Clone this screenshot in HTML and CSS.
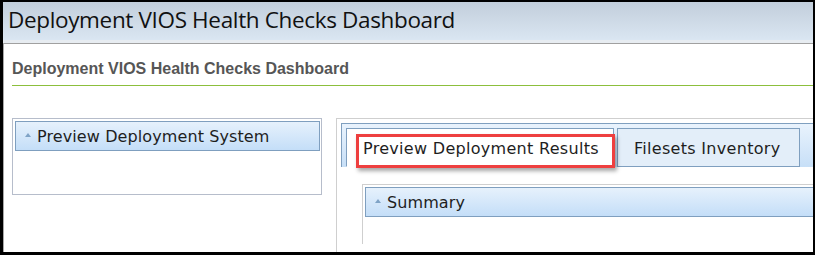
FILE: index.html
```html
<!DOCTYPE html>
<html>
<head>
<meta charset="utf-8">
<link rel="stylesheet" href="styles.css">
</head>
<body>
<div class="frame">
  <div class="window">
    <div class="titlebar">Deployment VIOS Health Checks Dashboard</div>
    <div class="strip"></div>
    <div class="content">
      <h1 class="heading">Deployment VIOS Health Checks Dashboard</h1>
      <div class="panels">
        <div class="panel left-panel">
          <div class="phead"><span class="tri"></span><span>Preview Deployment System</span></div>
        </div>
        <div class="panel right-panel">
          <div class="tabstrip">
            <div class="tab selected">Preview Deployment Results</div>
            <div class="tab files">Filesets Inventory</div>
            <div class="highlight"></div>
          </div>
          <div class="tabbody">
            <div class="summary">
              <div class="phead"><span class="tri"></span><span>Summary</span></div>
            </div>
          </div>
        </div>
      </div>
    </div>
  </div>
</div>
</body>
</html>
```
FILE: styles.css
```css
html, body {
  margin: 0;
  padding: 0;
  width: 815px;
  height: 255px;
  overflow: hidden;
  background: #000;
}
.frame {
  box-sizing: border-box;
  width: 815px;
  height: 255px;
  padding: 2px 2px 3px 3px;
}
.window {
  display: flex;
  flex-direction: column;
  height: 100%;
  overflow: hidden;
  background: #fff;
}
.titlebar {
  height: 38px;
  flex: none;
  box-sizing: border-box;
  padding-left: 5px;
  background: linear-gradient(#c2cedb, #dae6f2);
  font-family: "Open Sans", sans-serif;
  font-size: 22.5px;
  line-height: 36px;
  color: #111;
  white-space: nowrap;
  letter-spacing: -0.35px;
}
.strip {
  height: 3px;
  flex: none;
  background: #e7ecf1;
}
.content {
  flex: 1;
  border-top: 1px solid #a0a0a0;
  border-left: 1px solid #a8a8a8;
  overflow: hidden;
  background: #fff;
}
.heading {
  margin: 0 0 0 8px;
  padding: 16px 0 7px 0;
  font-family: "Liberation Sans", Arial, sans-serif;
  font-weight: bold;
  font-size: 16px;
  line-height: 18px;
  color: #565656;
  border-bottom: 1px solid #8cbf3c;
  white-space: nowrap;
}
.panels {
  display: flex;
  align-items: flex-start;
  margin-top: 32px;
  padding-left: 8px;
}
.panel {
  box-sizing: border-box;
  flex: none;
}
.left-panel {
  width: 310px;
  height: 77px;
  border: 1px solid #b6bdcb;
  padding: 2px 1px 0 2px;
}
.phead {
  box-sizing: border-box;
  height: 30px;
  border: 1px solid #7f9fbf;
  background: linear-gradient(#e6f1fc, #c4def8);
  display: flex;
  align-items: center;
  font-family: "DejaVu Sans", Verdana, sans-serif;
  font-size: 16px;
  letter-spacing: 0.1px;
  color: #1e1e1e;
  white-space: nowrap;
}
.tri {
  width: 0;
  height: 0;
  border-left: 3px solid transparent;
  border-right: 3px solid transparent;
  border-bottom: 4px solid #7fa3c6;
  margin: 0 6px 0 9px;
  position: relative;
  top: -1px;
}
.right-panel {
  margin-left: 14px;
  width: 520px;
  height: 140px;
  border: 1px solid #cfcfcf;
  padding: 4px 0 0 4px;
}
.tabstrip {
  position: relative;
  display: flex;
  align-items: flex-end;
  gap: 3px;
  height: 44px;
  box-sizing: border-box;
  border-left: 1px solid #7f9fbf;
  border-top: 1px solid #7f9fbf;
  padding: 5px 0 0 4px;
  background: linear-gradient(#e9f3fd, #c7dff7);
}
.tab {
  box-sizing: border-box;
  flex: none;
  height: 39px;
  padding: 0 0 0 16px;
  border: 1px solid #7f9fbf;
  background: #e3eef9;
  font-family: "DejaVu Sans", Verdana, sans-serif;
  font-size: 16px;
  letter-spacing: 0.3px;
  line-height: 39px;
  color: #1e1e1e;
  white-space: nowrap;
}
.tab.selected {
  width: 268px;
  background: #fff;
  border-bottom-color: #fff;
}
.tab.files {
  width: 183px;
}
.highlight {
  position: absolute;
  left: 14px;
  top: 10px;
  width: 259px;
  height: 34px;
  box-sizing: border-box;
  border: 3px solid #ee3f3f;
  box-shadow: 2px 3px 4px rgba(0, 0, 0, 0.35);
}
.tabbody {
  padding: 17px 0 0 21px;
}
.summary {
  box-sizing: border-box;
  height: 60px;
  border-left: 1px solid #cfcfcf;
  border-top: 1px solid #cfcfcf;
  padding: 2px 0 0 2px;
}
```
